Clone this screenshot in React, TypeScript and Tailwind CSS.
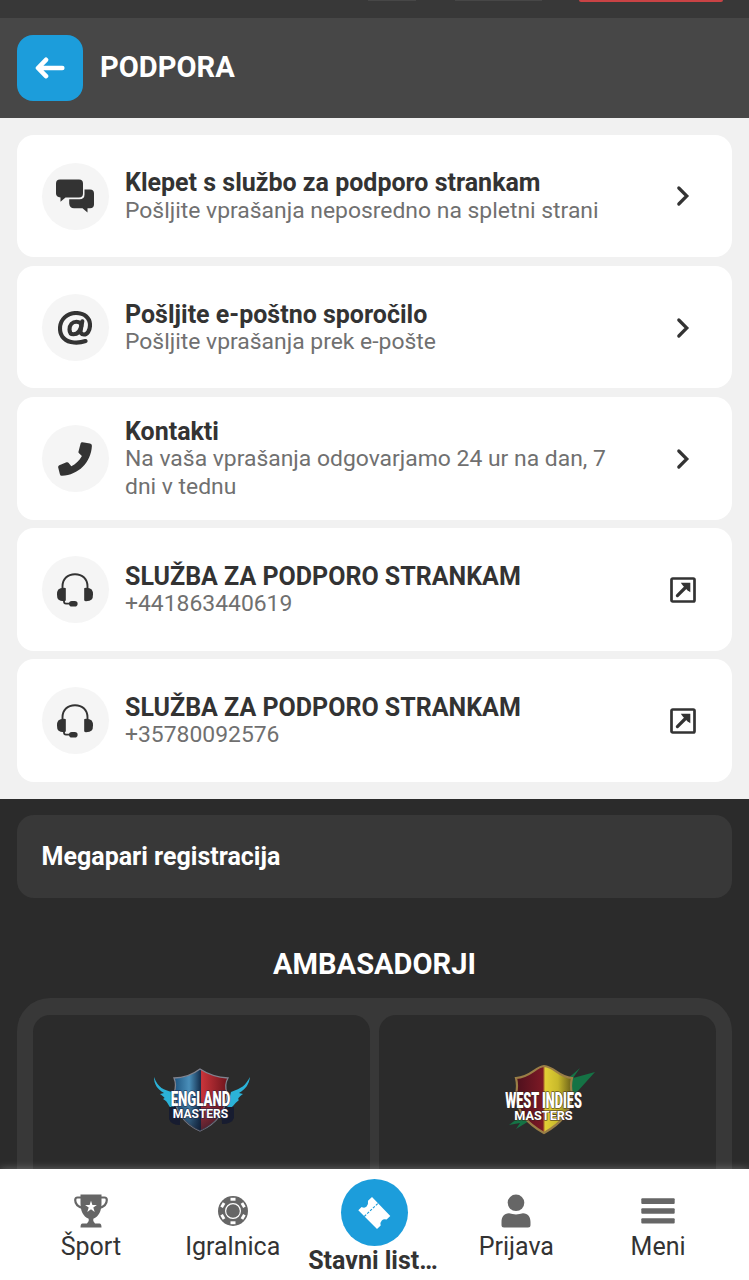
import type { ReactNode } from "react"

/* ── Icons ─────────────────────────────────────────────────── */

function ChatIcon() {
  return (
    <svg width="38" height="34" viewBox="0 0 38 34" fill="currentColor">
      <path d="M4 0.5H23Q27 0.5 27 4.500V14.500Q27 18.500 23 18.500H9.500L4.500 22.800V18.500Q0 18 0 14.500V4.500Q0 0.500 4 0.500Z" />
      <path d="M28.500 10.500H34Q38 10.500 38 14.500V25.500Q38 29 34 29.300H31.500V33.500L26.500 29.300H18Q13.500 29 13.200 24.500V20.200H23.500Q28.500 20.200 28.500 15.500Z" />
    </svg>
  )
}

function AtIcon() {
  return (
    <svg width="34" height="34" viewBox="0 0 34 34" fill="none" stroke="currentColor" strokeWidth="4.100" strokeLinecap="round">
      <path d="M27.500 30C24 31.300 20 31.800 16 31.500C7.500 31 2 25.500 2 17.500C2 8.500 9 2 18 2C26.500 2 32 7 32 14C32 20 29 23.500 26 23.500C23 23.500 22.200 21.500 22.700 19L24.300 10.200" />
      <path d="M23.300 15C23.300 12.500 21.500 10.700 18.500 10.700C14.500 10.700 11.500 14 11.500 18.500C11.500 21.500 13 23.300 15.500 23.300C19.500 23.300 22.300 20 23.300 15Z" />
    </svg>
  )
}

function PhoneIcon() {
  return (
    <svg width="34" height="34" viewBox="0 0 34 34" fill="currentColor">
      <path d="M24.500 0.200L32 1.500Q34 2 33.900 4C33 20.500 20.500 33 4 33.800Q2.300 34 1.900 32.200L0.200 25.500Q-0.100 24 1.300 23.300L8.500 20.300Q9.800 19.800 10.700 20.900L13.300 24.200C17.500 22.200 21.500 18.700 23.900 14L21 11.300Q20.100 10.400 20.600 9.200L22.600 1.400Q23 0 24.500 0.200Z" />
    </svg>
  )
}

function HeadsetIcon() {
  return (
    <svg width="36" height="34" viewBox="0 0 36 34" fill="currentColor">
      <path d="M5.500 17V13.500C5.500 6 10.500 1.200 18 1.200S30.500 6 30.500 13.500V17" fill="none" stroke="currentColor" strokeWidth="1.900" />
      <path d="M8.800 15.200V27.300Q8.500 28.200 7 28.200Q3 28.200 1.300 26.500Q0 25 0 21.500T1.300 16.400Q3 14.700 7 14.700Q8.500 14.700 8.800 15.200Z" />
      <path d="M27.200 15.200V27.300Q27.500 28.200 29 28.200Q33 28.200 34.700 26.500Q36 25 36 21.500T34.700 16.400Q33 14.700 29 14.700Q27.500 14.700 27.200 15.200Z" />
      <path d="M7 27V28.500Q7 30.600 9 30.600H15" fill="none" stroke="currentColor" strokeWidth="1.800" />
      <rect x="12" y="27.900" width="8.600" height="5.600" rx="2.800" />
    </svg>
  )
}

function ChevronIcon() {
  return (
    <svg width="26" height="26" viewBox="0 0 26 26" fill="none" stroke="currentColor" strokeWidth="3.200" strokeLinecap="round" strokeLinejoin="miter">
      <path d="M8.800 5L16.800 13L8.800 21" />
    </svg>
  )
}

function ExternalIcon() {
  return (
    <svg width="26" height="26" viewBox="0 0 26 26" fill="none" stroke="currentColor">
      <rect x="1.500" y="1.500" width="23" height="23" rx="1.200" strokeWidth="2.700" />
      <path d="M7.400 18.600L15.500 10.500" strokeWidth="3.200" strokeLinecap="round" />
      <path d="M10.800 5.700H20.300V15.200L17.400 13.200L12.800 8.600Z" fill="currentColor" stroke="none" />
    </svg>
  )
}

function TrophyIcon() {
  return (
    <svg width="34" height="34" viewBox="0 0 34 34" fill="currentColor">
      <path d="M6.500 0.500H27.500V9C27.500 17 25 22.500 19.300 24.700V27L21 29.500H25.500Q27.500 29.700 27.500 33.500H6.500Q6.500 29.700 8.500 29.500H13L14.700 27V24.700C9 22.500 6.500 17 6.500 9Z" />
      <path d="M8 3.500H3.500Q1.200 3.500 1.200 6C1.200 10.500 3.500 12.500 8.500 14M26 3.500H30.500Q32.800 3.500 32.800 6C32.800 10.500 30.500 12.500 25.500 14" fill="none" stroke="currentColor" strokeWidth="2.200" />
      <path d="M17 6.700L18.400 11H22.900L19.300 13.600L20.700 18L17 15.300L13.300 18L14.700 13.600L11.100 11H15.600Z" fill="white" />
    </svg>
  )
}

function ChipIcon() {
  return (
    <svg width="34" height="34" viewBox="0 0 34 34">
      <circle cx="17" cy="17" r="15" fill="currentColor" />
      {[0, 60, 120, 180, 240, 300].map((angle) => (
        <rect key={angle} x="14.500" y="3.800" width="5" height="2.900" fill="white" transform={`rotate(${angle} 17 17)`} />
      ))}
      <circle cx="17" cy="17" r="7.400" fill="none" stroke="white" strokeWidth="1.200" />
    </svg>
  )
}

function UserIcon() {
  return (
    <svg width="34" height="34" viewBox="0 0 34 34" fill="currentColor">
      <circle cx="17" cy="8.800" r="8.300" />
      <path d="M10 19.300Q17 21.500 24 19.300C29 19.300 31.500 23 31.500 28V31Q31.500 33.500 29 33.500H5Q2.500 33.500 2.500 31V28C2.500 23 5 19.300 10 19.300Z" />
    </svg>
  )
}

function MenuIcon() {
  return (
    <svg width="34" height="34" viewBox="0 0 34 34" fill="currentColor">
      <rect x="0.300" y="4.300" width="33.400" height="5.700" rx="1" />
      <rect x="0.300" y="14.300" width="33.400" height="5.500" rx="1" />
      <rect x="0.300" y="24.300" width="33.400" height="5.300" rx="1" />
    </svg>
  )
}

function TicketIcon() {
  return (
    <svg width="34" height="34" viewBox="0 0 34 34">
      <path d="M1.300 14.300L4.600 11Q7.600 12.600 9.600 10.600Q11.600 8.600 11 4.800L15 1L33.300 20L29.600 23.500Q26.600 22.600 24.800 24.400Q22.800 26.400 23.700 29.400L20 33Z" fill="white" />
      <path d="M7.300 20.500L20.800 7.500" stroke="#1c9ddb" strokeWidth="1.100" strokeDasharray="2.600 1.400" />
    </svg>
  )
}

/* ── Ambassador logos ──────────────────────────────────────── */

function EnglandLogo() {
  return (
    <svg width="120" height="95" viewBox="0 0 120 95">
      <defs>
        <linearGradient id="eng" x1="0" x2="1">
          <stop offset="0" stopColor="#1d5480" />
          <stop offset="0.280" stopColor="#4a8fba" />
          <stop offset="0.490" stopColor="#15304f" />
          <stop offset="0.510" stopColor="#c9343a" />
          <stop offset="1" stopColor="#6d141c" />
        </linearGradient>
        <linearGradient id="engShade" x1="0" y1="0" x2="0" y2="1">
          <stop offset="0.450" stopColor="#10182c" stopOpacity="0" />
          <stop offset="1" stopColor="#10182c" stopOpacity="0.650" />
        </linearGradient>
      </defs>
      <path d="M14 27C18 38 24 40 32 42L35 63C28 57 29 52 23 49C26 48 24 47 20 44L24 43C17 39 14 34 14 27Z" fill="#2bb2d8" />
      <path d="M110 27C105 36 102 38 91 42L86 62C93 57 94 54 99 50C97 49 99 47 103 44L99 43C106 39 109 34 110 27Z" fill="#2bb2d8" />
      <path d="M29 57H40V75Q31 75 29 69ZM81 57H94V68Q92 74 82 74Z" fill="#171c30" />
      <path d="M60 19Q48 28 34 28Q37 35 34 43C35 62 44 74 60 81C76 74 86 62 87 43Q84 35 88 28Q72 27 60 19Z" fill="url(#eng)" stroke="#80838f" strokeWidth="1.300" />
      <path d="M60 19Q48 28 34 28Q37 35 34 43C35 62 44 74 60 81C76 74 86 62 87 43Q84 35 88 28Q72 27 60 19Z" fill="url(#engShade)" />
      <g fill="white" textAnchor="middle" fontFamily="Roboto, sans-serif" fontWeight="900" stroke="#1d2744" strokeWidth="1.200" paintOrder="stroke">
        <text transform="translate(60.500 55.500) scale(0.660 1)" fontSize="20">ENGLAND</text>
        <text transform="translate(60.500 67.500)" fontSize="12" fontWeight="700">MASTERS</text>
      </g>
    </svg>
  )
}

function WestIndiesLogo() {
  return (
    <svg width="120" height="95" viewBox="0 0 120 95">
      <defs>
        <linearGradient id="wi" x1="0" x2="1">
          <stop offset="0" stopColor="#4d101d" />
          <stop offset="0.480" stopColor="#7d1925" />
          <stop offset="0.520" stopColor="#e2cf35" />
          <stop offset="0.750" stopColor="#c8b92b" />
          <stop offset="1" stopColor="#685e18" />
        </linearGradient>
      </defs>
      <path d="M75 31L90 18L83 28L105 22L87 42L70 55ZM36 62L19 75L30 73L26 79L44 68Z" fill="#157345" />
      <path d="M54 16C45 17 41 27 26 28Q28 36 26 44C27 63 38 74 54 83C70 74 81 63 82 44Q80 36 82 28C68 27 65 17 54 16Z" fill="url(#wi)" stroke="#9a7e46" strokeWidth="2.200" />
      <g fill="white" textAnchor="middle" fontFamily="Roboto, sans-serif" fontWeight="900" stroke="#3a2620" strokeWidth="1.200" paintOrder="stroke">
        <text transform="translate(53.500 57.500) scale(0.590 1)" fontSize="21.500">WEST INDIES</text>
        <text transform="translate(53.500 69.500) scale(1.030 1)" fontSize="12.300" fontWeight="700">MASTERS</text>
      </g>
    </svg>
  )
}

/* ── Data ──────────────────────────────────────────────────── */

const contacts = [
  { icon: <ChatIcon />, title: "Klepet s službo za podporo strankam", sub: "Pošljite vprašanja neposredno na spletni strani", external: false },
  { icon: <AtIcon />, title: "Pošljite e-poštno sporočilo", sub: "Pošljite vprašanja prek e-pošte", external: false },
  { icon: <PhoneIcon />, title: "Kontakti", sub: "Na vaša vprašanja odgovarjamo 24 ur na dan, 7 dni v tednu", external: false },
  { icon: <HeadsetIcon />, title: "SLUŽBA ZA PODPORO STRANKAM", sub: "+441863440619", external: true },
  { icon: <HeadsetIcon />, title: "SLUŽBA ZA PODPORO STRANKAM", sub: "+35780092576", external: true },
]

function NavItem({ icon, label }: { icon: ReactNode; label: string }) {
  return (
    <a className="flex flex-1 flex-col items-center pt-[24.500px] text-[#666]">
      {icon}
      <span className="mt-[4.500px] text-[25px] leading-[30px] text-[#333]">{label}</span>
    </a>
  )
}

export default function App() {
  return (
    <div className="flex h-[1280px] w-[749px] flex-col overflow-hidden bg-[#2b2b2b] font-['Roboto',sans-serif]">
      {/* Bottom edge of the site header */}
      <div className="flex h-[18px] shrink-0 items-start bg-[#383838] pl-[368px]">
        <div className="h-px w-[48px] bg-[#474747]" />
        <div className="ml-[39px] h-px w-[87px] bg-[#474747]" />
        <div className="ml-[37px] h-[1.500px] w-[144px] rounded-b-full bg-[#c94345]" />
      </div>

      {/* Title bar */}
      <header className="flex h-[100px] shrink-0 items-center gap-[17px] bg-[#474747] px-[17px]">
        <button className="flex size-[66px] items-center justify-center rounded-[16px] bg-[#1c9ddb]">
          <svg width="30" height="22" viewBox="0 0 30 22" fill="none" stroke="white" strokeWidth="4.600" strokeLinecap="round" strokeLinejoin="round">
            <path d="M11 2.800L3 11L11 19.200M4 11H27.300" />
          </svg>
        </button>
        <h1 className="text-[29.100px] font-bold leading-none text-white">PODPORA</h1>
      </header>

      {/* Contact options */}
      <main className="flex h-[680.500px] shrink-0 flex-col gap-[8.300px] bg-[#f1f1f1] px-[16.600px] pt-[16.600px]">
        {contacts.map(({ icon, title, sub, external }, i) => (
          <div key={i} className="flex h-[122.800px] shrink-0 items-center rounded-[17px] bg-white pl-[25px] pr-[36.500px] pt-[1px] text-[#333]">
            <div className="flex size-[67px] shrink-0 items-center justify-center rounded-full bg-[#f5f5f5]">{icon}</div>
            <div className="ml-[16.400px] w-[500px] pt-[1px]">
              <p className="text-[25px] font-bold leading-[27.500px]">{title}</p>
              <p className="text-[22.900px] leading-[27.500px] text-[#707070]">{sub}</p>
            </div>
            <div className="ml-auto">{external ? <ExternalIcon /> : <ChevronIcon />}</div>
          </div>
        ))}
      </main>

      {/* Footer content */}
      <section className="min-h-0 flex-1 overflow-hidden px-[16.600px] pt-[16.600px]">
        <div className="flex h-[83px] items-center rounded-[17px] bg-[#383838] px-[25px] text-[25px] font-bold text-white">
          Megapari registracija
        </div>
        <h2 className="mt-[49px] text-center text-[29.100px] font-bold leading-[34px] text-white">AMBASADORJI</h2>
        <div className="mt-[17px] grid h-[300px] grid-cols-2 gap-[8.300px] rounded-[33px] bg-[#383838] p-[16.600px]">
          <div className="flex justify-center rounded-[17px] bg-[#2b2b2b] pr-[3px] pt-[35px]">
            <EnglandLogo />
          </div>
          <div className="flex justify-center rounded-[17px] bg-[#2b2b2b] pl-[5px] pt-[35px]">
            <WestIndiesLogo />
          </div>
        </div>
      </section>

      {/* Bottom navigation */}
      <nav className="relative flex h-[111px] shrink-0 bg-white px-[20px] shadow-[0_0_8px_rgba(255,255,255,0.3)]">
        <NavItem icon={<TrophyIcon />} label="Šport" />
        <NavItem icon={<ChipIcon />} label="Igralnica" />
        <a className="flex flex-1 flex-col items-center pt-[10px]">
          <span className="flex size-[67px] items-center justify-center rounded-full bg-[#1c9ddb]">
            <TicketIcon />
          </span>
          <span className="mt-px whitespace-nowrap pr-[3px] text-[25px] font-bold leading-[28px] text-[#333]">Stavni list…</span>
        </a>
        <NavItem icon={<UserIcon />} label="Prijava" />
        <NavItem icon={<MenuIcon />} label="Meni" />
      </nav>
    </div>
  )
}
